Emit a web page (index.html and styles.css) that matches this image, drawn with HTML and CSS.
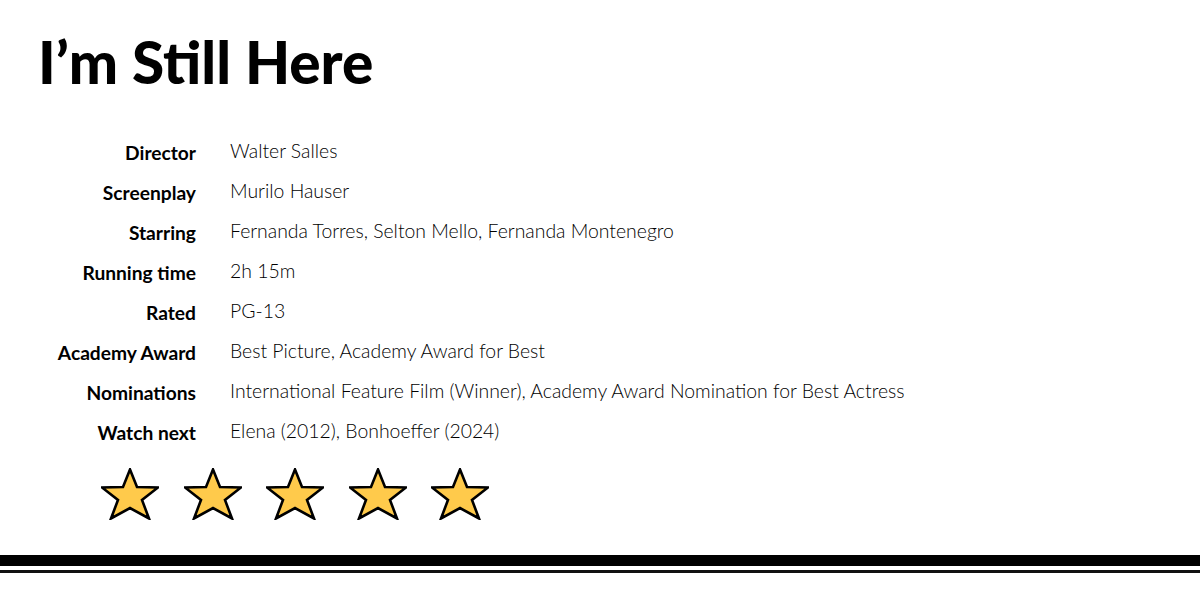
FILE: index.html
```html
<!DOCTYPE html>
<html lang="en">
<head>
  <meta charset="UTF-8" />
  <meta name="viewport" content="width=device-width, initial-scale=1.0" />
  <title>I’m Still Here</title>
  <link rel="stylesheet" href="styles.css">
</head>
<body>
  <main class="card">
    <h1 class="title">I’m Still Here</h1>

    <!-- Film facts -->
    <dl class="facts">
      <dt>Director</dt>
      <dd>Walter Salles</dd>
      <dt>Screenplay</dt>
      <dd>Murilo Hauser</dd>
      <dt>Starring</dt>
      <dd>Fernanda Torres, Selton Mello, Fernanda Montenegro</dd>
      <dt>Running time</dt>
      <dd>2h 15m</dd>
      <dt>Rated</dt>
      <dd>PG-13</dd>
      <dt>Academy Award</dt>
      <dd>Best Picture, Academy Award for Best</dd>
      <dt>Nominations</dt>
      <dd>International Feature Film (Winner), Academy Award Nomination for Best Actress</dd>
      <dt>Watch next</dt>
      <dd>Elena (2012), Bonhoeffer (2024)</dd>
    </dl>

    <!-- Rating -->
    <div class="stars">
      <svg class="star" viewBox="0 0 58 52"><polygon points="29,1.5 36,19 57,19.5 41,32 48,50.5 29,40 10,50.5 17,32 1,19.5 22,19" /></svg>
      <svg class="star" viewBox="0 0 58 52"><polygon points="29,1.5 36,19 57,19.5 41,32 48,50.5 29,40 10,50.5 17,32 1,19.5 22,19" /></svg>
      <svg class="star" viewBox="0 0 58 52"><polygon points="29,1.5 36,19 57,19.5 41,32 48,50.5 29,40 10,50.5 17,32 1,19.5 22,19" /></svg>
      <svg class="star" viewBox="0 0 58 52"><polygon points="29,1.5 36,19 57,19.5 41,32 48,50.5 29,40 10,50.5 17,32 1,19.5 22,19" /></svg>
      <svg class="star" viewBox="0 0 58 52"><polygon points="29,1.5 36,19 57,19.5 41,32 48,50.5 29,40 10,50.5 17,32 1,19.5 22,19" /></svg>
    </div>
  </main>

  <!-- Double rule at the bottom -->
  <footer class="rule">
    <div class="rule-thick"></div>
    <div class="rule-thin"></div>
  </footer>
</body>
</html>
```

FILE: styles.css
```css
* {
  margin: 0;
  padding: 0;
  box-sizing: border-box;
}
body {
  font-family: Lato, "Open Sans", sans-serif;
  background: #fff;
  color: #000;
  width: 1200px;
  height: 600px;
  overflow: hidden;
}
.card {
  padding: 32px 38px 0;
}
.title {
  font-size: 58.5px;
  font-weight: 900;
  line-height: 1;
}
/* Label / value grid */
.facts {
  margin-top: 40px;
  display: grid;
  grid-template-columns: 158px 1fr;
  grid-auto-rows: 40px;
  column-gap: 34px;
  align-items: center;
}
.facts dt {
  text-align: right;
  font-weight: 700;
  font-size: 19.2px;
  padding-top: 4px;
}
.facts dd {
  font-weight: 300;
  font-size: 19.4px;
  color: #000;
}
.stars {
  margin-top: 17px;
  padding-left: 63px;
  display: flex;
  gap: 24.6px;
}
.star {
  width: 58px;
  height: 52px;
}
.star polygon {
  fill: #ffca4b;
  stroke: #000;
  stroke-width: 2.6;
  stroke-linejoin: miter;
}
.rule {
  margin-top: 35px;
}
.rule-thick {
  height: 11px;
  background: #000;
}
.rule-thin {
  margin-top: 4px;
  height: 3px;
  background: #111;
}
```
